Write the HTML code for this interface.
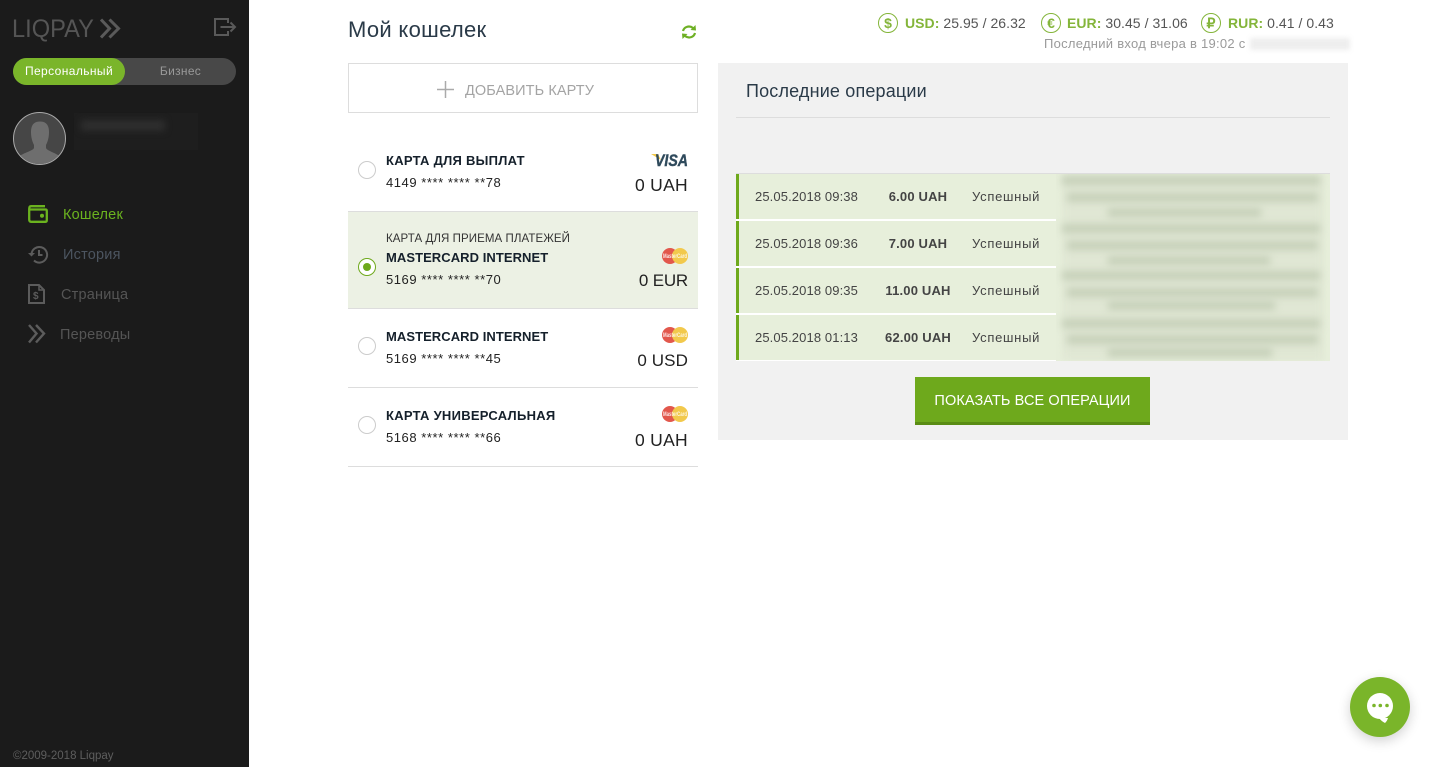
<!DOCTYPE html>
<html lang="ru"><head><meta charset="utf-8"><title>LiqPay</title>
<style>
html,body{margin:0;padding:0;width:1439px;height:767px;overflow:hidden;background:#fff}
body{font-family:"Liberation Sans",sans-serif;position:relative;color:#222}
.t{position:absolute;white-space:nowrap}
.a{position:absolute}
svg{position:absolute;overflow:visible}
.nav{font-size:14.5px;letter-spacing:.2px;line-height:20px;color:#555}
.cn{font-size:13px;font-weight:bold;line-height:18px;color:#15202b;letter-spacing:.27px;left:386px}
.num{font-size:13px;line-height:16px;color:#222;left:386px;letter-spacing:.55px}
.amt{font-size:17.5px;line-height:22px;color:#222;right:751px;letter-spacing:.3px}
.rad{position:absolute;left:358px;width:16px;height:16px;border:1px solid #ccc;border-radius:50%;background:#fff}
.row{position:absolute;left:736px;width:317px;height:45px;background:#e7efdb;border-left:3px solid #6ea91c}
.d{left:755px;font-size:13px;line-height:18px;color:#444;letter-spacing:.11px}
.s{left:972px;font-size:13px;line-height:18px;color:#444;letter-spacing:.72px}
.m{font-size:13px;font-weight:bold;line-height:18px;color:#444;text-align:center;width:80px;left:878px;letter-spacing:.18px}
.g{color:#84b53a;font-weight:bold}
.rate{font-size:14px;line-height:18px;color:#555;letter-spacing:.05px}
.cur{position:absolute;width:18px;height:18px;border:1px solid #84b53a;border-radius:50%;color:#84b53a;text-align:center;line-height:18px;font-size:14px;font-weight:bold}
.b{position:absolute;background:#c6d0b9;filter:blur(3.8px);height:9px}
</style></head><body>

<div class="a" style="left:0;top:0;width:249px;height:767px;background:#1b1b1b"></div>
<div class="t" style="left:12px;top:14px;font-size:25px;line-height:30px;color:#555;transform:scaleX(.945);transform-origin:0 0">LIQPAY</div>
<svg style="left:100px;top:18px" width="22" height="22" fill="none" stroke="#5a5a5a" stroke-width="3"><path d="M1 1.500 L9.500 10.500 L1 19.500M9.500 1.500 L18.500 10.500 L9.500 19.500"/></svg>
<svg style="left:214px;top:18px" width="23" height="19" fill="none" stroke="#5a5a5a" stroke-width="2"><path d="M14 5V1H1V17H14V13"/><path d="M6.500 9H21M16.500 4.500L21 9L16.500 13.500"/></svg>

<div class="a" style="left:13px;top:58px;width:223px;height:27px;background:#484848;border-radius:13.5px"></div>
<div class="a" style="left:13px;top:58px;width:112px;height:27px;background:#7ab52a;border-radius:13.5px"></div>
<div class="t" style="left:13px;top:58px;width:112px;text-align:center;font-size:12px;line-height:27px;color:#fff;letter-spacing:.4px">Персональный</div>
<div class="t" style="left:125px;top:58px;width:111px;text-align:center;font-size:12px;line-height:27px;color:#999;letter-spacing:.3px">Бизнес</div>

<div class="a" style="left:13px;top:112px;width:51px;height:51px;border:1px solid #aaa;border-radius:50%;background:#464646;overflow:hidden">
<svg style="left:0;top:0" width="51" height="51"><path fill="#6e6e6e" d="M17 19C17 12 20 8.500 26 8.500C32 8.500 35 12 35 19C35 24 34 28 32 32V35C33 38 43 40 48 45V51H3V45C8 40 19 38 20 35V32C18 28 17 24 17 19Z"/></svg>
</div>
<div class="a" style="left:74px;top:113px;width:124px;height:37px;background:#1e1e1e"></div>
<div class="a" style="left:81px;top:120px;width:84px;height:11px;background:#2e2e2e;filter:blur(3.5px)"></div>

<svg style="left:28px;top:205px" width="20" height="18" fill="none" stroke="#6bb31f" stroke-width="2.300"><path d="M3 1.200H17M1.200 4C1.200 2 2 1.200 3 1.200M1.200 4V14.500C1.200 16 2 16.800 3 16.800H17.500C18.500 16.800 18.800 16 18.800 15V6C18.800 5 18.500 4.500 17.500 4.500H2"/><circle cx="14" cy="10.800" r="2" fill="#6bb31f" stroke="none"/></svg>
<div class="t nav" style="left:63px;top:205px;color:#6bb31f">Кошелек</div>
<svg style="left:28px;top:245px" width="21" height="19" fill="none" stroke="#5c5c5c" stroke-width="2"><path d="M3.500 9.500A7.800 7.800 0 1 1 6 15.500"/><path d="M0 8L3.500 11.500L7 8Z" fill="#5c5c5c" stroke="none"/><path d="M11 5V10H14.500"/></svg>
<div class="t nav" style="left:63px;top:245px;color:#4c5560">История</div>
<svg style="left:28px;top:284px" width="18" height="20" fill="none" stroke="#5c5c5c" stroke-width="2"><path d="M1 1H11L16 6V19H1Z"/><path d="M11 1V6H16" stroke-width="1.500"/><text x="5" y="15" font-family="Liberation Sans" font-size="10" font-weight="bold" fill="#5c5c5c" stroke="none">$</text></svg>
<div class="t nav" style="left:61px;top:285px">Страница</div>
<svg style="left:28px;top:324px" width="18" height="20" fill="none" stroke="#5c5c5c" stroke-width="2.400"><path d="M1 1L8.500 9.500L1 18.500M8 1L16 9.500L8 18.500"/></svg>
<div class="t nav" style="left:60px;top:325px">Переводы</div>
<div class="t" style="left:13px;top:748px;font-size:11.500px;line-height:16px;color:#5e5e5e">©2009-2018 Liqpay</div>

<div class="t" style="left:348px;top:16px;font-size:22px;line-height:28px;color:#2a3a48;letter-spacing:.3px">Мой кошелек</div>
<svg style="left:681px;top:24px" width="16" height="16" fill="none" stroke="#6eb024" stroke-width="2.200"><path d="M2 7C3 3 8 1 12 4"/><path d="M14 9C13 13 8 15 4 12"/><path d="M9.500 6L15 6.500L14.500 1Z" fill="#6eb024" stroke="none"/><path d="M6.500 10L1 9.500L1.500 15Z" fill="#6eb024" stroke="none"/></svg>

<div class="a" style="left:348px;top:63px;width:348px;height:48px;border:1px solid #ddd"></div>
<svg style="left:437px;top:81px" width="17" height="17" stroke="#aaa" stroke-width="1.500"><path d="M8.500 0V17M0 8.500H17"/></svg>
<div class="t" style="left:465px;top:81px;font-size:14.500px;line-height:20px;color:#a4a4a4;letter-spacing:.1px">ДОБАВИТЬ КАРТУ</div>

<div class="a" style="left:348px;top:211px;width:350px;height:98px;background:#ecf1e4;border-top:1px solid #ddd;border-bottom:1px solid #ddd;box-sizing:border-box"></div>
<div class="a" style="left:348px;top:387px;width:350px;height:1px;background:#ddd"></div>
<div class="a" style="left:348px;top:466px;width:350px;height:1px;background:#ddd"></div>

<div class="rad" style="top:161px"></div>
<div class="t cn" style="top:152px">КАРТА ДЛЯ ВЫПЛАТ</div>
<div class="t num" style="top:175px">4149 **** **** **78</div>
<svg style="left:651px;top:153px" width="38" height="14"><path d="M0 1H7L10 7Z" fill="#f2c94c"/><text x="4" y="13" font-family="Liberation Sans" font-size="16.500" font-weight="bold" font-style="italic" fill="#2f4a5c" stroke="#2f4a5c" stroke-width=".4" textLength="33" lengthAdjust="spacingAndGlyphs">VISA</text></svg>
<div class="t amt" style="top:174px">0 UAH</div>

<div class="t" style="left:386px;top:231px;font-size:11.500px;line-height:16px;color:#333;letter-spacing:.08px">КАРТА ДЛЯ ПРИЕМА ПЛАТЕЖЕЙ</div>
<div class="rad" style="top:258px;border-color:#6ea91c"></div>
<div class="a" style="left:363px;top:263px;width:8px;height:8px;border-radius:50%;background:#6ea91c"></div>
<div class="t cn" style="top:249px;letter-spacing:.06px">MASTERCARD INTERNET</div>
<div class="t num" style="top:272px">5169 **** **** **70</div>
<svg style="left:662px;top:248px" width="26" height="16"><circle cx="8" cy="8" r="8" fill="#e2574c"/><circle cx="18" cy="8" r="8" fill="#f2c94c"/><text x="1" y="10" font-family="Liberation Sans" font-size="6" font-weight="bold" fill="#fff" fill-opacity=".85" textLength="24" lengthAdjust="spacingAndGlyphs">MasterCard</text></svg>
<div class="t amt" style="top:270px;font-size:17px;letter-spacing:-.2px">0 EUR</div>

<div class="rad" style="top:337px"></div>
<div class="t cn" style="top:328px;letter-spacing:.06px">MASTERCARD INTERNET</div>
<div class="t num" style="top:351px">5169 **** **** **45</div>
<svg style="left:662px;top:327px" width="26" height="16"><circle cx="8" cy="8" r="8" fill="#e2574c"/><circle cx="18" cy="8" r="8" fill="#f2c94c"/><text x="1" y="10" font-family="Liberation Sans" font-size="6" font-weight="bold" fill="#fff" fill-opacity=".85" textLength="24" lengthAdjust="spacingAndGlyphs">MasterCard</text></svg>
<div class="t amt" style="top:350px;font-size:17px;letter-spacing:.1px">0 USD</div>

<div class="rad" style="top:416px"></div>
<div class="t cn" style="top:407px">КАРТА УНИВЕРСАЛЬНАЯ</div>
<div class="t num" style="top:430px">5168 **** **** **66</div>
<svg style="left:662px;top:406px" width="26" height="16"><circle cx="8" cy="8" r="8" fill="#e2574c"/><circle cx="18" cy="8" r="8" fill="#f2c94c"/><text x="1" y="10" font-family="Liberation Sans" font-size="6" font-weight="bold" fill="#fff" fill-opacity=".85" textLength="24" lengthAdjust="spacingAndGlyphs">MasterCard</text></svg>
<div class="t amt" style="top:429px">0 UAH</div>

<div class="cur" style="left:878px;top:13px">$</div>
<div class="t rate" style="left:905px;top:14px"><span class="g">USD:</span> 25.95 / 26.32</div>
<div class="cur" style="left:1041px;top:13px">€</div>
<div class="t rate" style="left:1067px;top:14px"><span class="g">EUR:</span> 30.45 / 31.06</div>
<div class="cur" style="left:1201px;top:13px">₽</div>
<div class="t rate" style="left:1228px;top:14px"><span class="g">RUR:</span> 0.41 / 0.43</div>
<div class="t" style="left:1044px;top:36px;font-size:13px;line-height:16px;color:#9a9a9a;letter-spacing:.27px">Последний вход вчера в 19:02 с</div>
<div class="a" style="left:1250px;top:38px;width:100px;height:12px;background:#eee;filter:blur(2.500px)"></div>

<div class="a" style="left:718px;top:63px;width:630px;height:377px;background:#f1f1f1"></div>
<div class="t" style="left:746px;top:79px;font-size:18px;line-height:24px;color:#2a3a48;letter-spacing:.17px">Последние операции</div>
<div class="a" style="left:736px;top:117px;width:594px;height:1px;background:#ddd"></div>
<div class="a" style="left:736px;top:173px;width:594px;height:1px;background:#ddd"></div>

<div class="a" style="left:736px;top:174px;width:320px;height:187px;background:#fff"></div>
<div class="a" style="left:1056px;top:174px;width:274px;height:187px;background:#e7efdb"></div>
<div class="row" style="top:174px"></div>
<div class="row" style="top:221px"></div>
<div class="row" style="top:268px"></div>
<div class="row" style="top:315px"></div>

<div class="t d" style="top:188px">25.05.2018 09:38</div><div class="t m" style="top:188px">6.00 UAH</div><div class="t s" style="top:188px">Успешный</div>
<div class="t d" style="top:235px">25.05.2018 09:36</div><div class="t m" style="top:235px">7.00 UAH</div><div class="t s" style="top:235px">Успешный</div>
<div class="t d" style="top:282px">25.05.2018 09:35</div><div class="t m" style="top:282px">11.00 UAH</div><div class="t s" style="top:282px">Успешный</div>
<div class="t d" style="top:329px">25.05.2018 01:13</div><div class="t m" style="top:329px">62.00 UAH</div><div class="t s" style="top:329px">Успешный</div>

<div class="a" style="left:1056px;top:174px;width:274px;height:187px;overflow:hidden">
<div class="a" style="left:6px;top:0;width:262px;height:187px;background:#e0e7d4;filter:blur(4px)"></div>
<div class="b" style="left:6px;top:2px;width:258px"></div><div class="b" style="left:11px;top:19px;width:251px"></div><div class="b" style="left:52px;top:34px;width:153px"></div>
<div class="b" style="left:6px;top:50px;width:258px"></div><div class="b" style="left:11px;top:67px;width:251px"></div><div class="b" style="left:52px;top:82px;width:162px"></div>
<div class="b" style="left:6px;top:97px;width:258px"></div><div class="b" style="left:11px;top:114px;width:251px"></div><div class="b" style="left:52px;top:127px;width:167px"></div>
<div class="b" style="left:6px;top:145px;width:258px"></div><div class="b" style="left:11px;top:161px;width:251px"></div><div class="b" style="left:52px;top:174px;width:164px"></div>
</div>

<div class="a" style="left:915px;top:377px;width:235px;height:45px;background:#6ea91c;border-bottom:3px solid #5a8c14"></div>
<div class="t" style="left:915px;top:379px;width:235px;text-align:center;font-size:14.500px;line-height:45px;color:#fff;letter-spacing:.1px">ПОКАЗАТЬ ВСЕ ОПЕРАЦИИ</div>

<div class="a" style="left:1350px;top:677px;width:60px;height:60px;border-radius:50%;background:#7ab52a;box-shadow:0 4px 12px rgba(0,0,0,.18)"></div>
<svg style="left:1367px;top:693px" width="26" height="30"><circle cx="13" cy="13" r="13" fill="#fff"/><path fill="#fff" d="M12 25H21C20.500 27 19.500 28.500 18 30C16 29 14 27.500 12 25Z"/><circle cx="7" cy="12.500" r="1.800" fill="#7ab52a"/><circle cx="13.300" cy="12.500" r="1.800" fill="#7ab52a"/><circle cx="20" cy="12.500" r="1.800" fill="#7ab52a"/></svg>

</body></html>
